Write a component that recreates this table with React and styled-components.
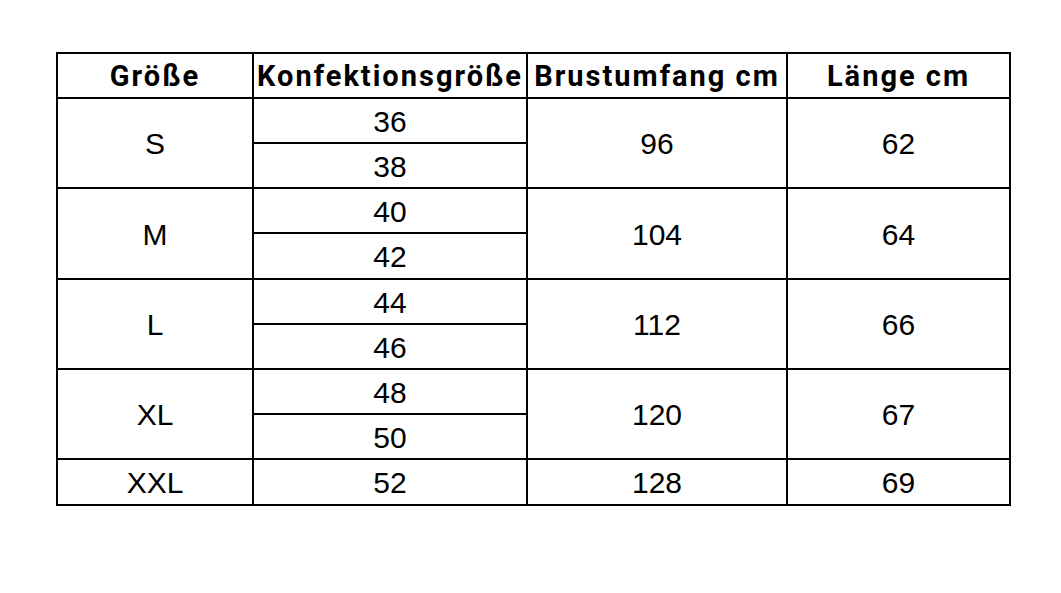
import React from "react";
import styled, { createGlobalStyle } from "styled-components";

const rows = [
  { size: "S", conf: ["36", "38"], chest: "96", length: "62" },
  { size: "M", conf: ["40", "42"], chest: "104", length: "64" },
  { size: "L", conf: ["44", "46"], chest: "112", length: "66" },
  { size: "XL", conf: ["48", "50"], chest: "120", length: "67" },
  { size: "XXL", conf: ["52"], chest: "128", length: "69" },
];

export default function App() {
  return (
    <>
      <GlobalStyle />
      <Page>
        <Table>
          <Head>Größe</Head>
          <Head>Konfektionsgröße</Head>
          <Head>Brustumfang cm</Head>
          <Head>Länge cm</Head>
          {rows.map((r) => {
            const span = r.conf.length;
            return (
              <React.Fragment key={r.size}>
                <Cell $span={span}>{r.size}</Cell>
                <Cell>{r.conf[0]}</Cell>
                <Cell $span={span}>{r.chest}</Cell>
                <Cell $span={span}>{r.length}</Cell>
                {r.conf.slice(1).map((c) => (
                  <Cell key={c}>{c}</Cell>
                ))}
              </React.Fragment>
            );
          })}
        </Table>
      </Page>
    </>
  );
}

const GlobalStyle = createGlobalStyle`
  body {
    margin: 0;
    background: #ffffff;
  }
`;

const Page = styled.div`
  width: 1061px;
  height: 593px;
  padding: 52px 0 0 56px;
  box-sizing: border-box;
  background: #ffffff;
`;

const Table = styled.div`
  display: grid;
  grid-template-columns: 194px 272px 258px 221px;
  grid-template-rows: 43px 43px 43px 43px 44px 43px 43px 43px 43px 44px;
  gap: 2px;
  padding: 2px;
  width: max-content;
  background: #000000;
`;

const Head = styled.div`
  display: flex;
  align-items: center;
  justify-content: center;
  background: #ffffff;
  font-family: Roboto, "Liberation Sans", sans-serif;
  font-weight: 700;
  font-size: 29px;
  letter-spacing: 2px;
  color: #000000;
  white-space: nowrap;
  padding-top: 1px;
`;

const Cell = styled.div`
  display: flex;
  align-items: center;
  justify-content: center;
  grid-row: span ${(p) => p.$span || 1};
  background: #ffffff;
  font-family: "Liberation Sans", Arial, sans-serif;
  font-size: 30px;
  color: #000000;
  padding-top: 2px;
`;
